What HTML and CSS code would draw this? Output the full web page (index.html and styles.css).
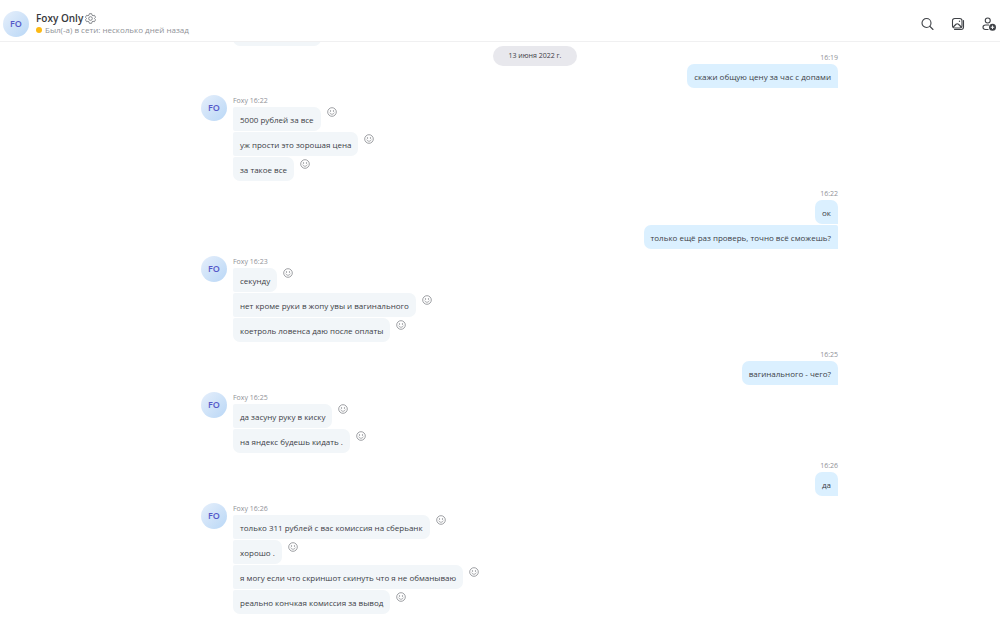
FILE: index.html
```html
<!DOCTYPE html>
<html lang="ru">
<head>
    <meta charset="UTF-8">
    <meta name="viewport" content="width=device-width, initial-scale=1.0">
    <title>Foxy Only</title>
    <link rel="stylesheet" href="styles.css">
</head>
<body>
    <svg class="sprite" aria-hidden="true">
        <symbol id="smile" viewBox="0 0 20 20">
            <circle cx="10" cy="10" r="8.6" fill="none" stroke="currentColor" stroke-width="1.6"/>
            <circle cx="7" cy="8" r="1.3" fill="currentColor"/>
            <circle cx="13" cy="8" r="1.3" fill="currentColor"/>
            <path d="M5.8 12c1 1.700 2.500 2.500 4.200 2.500s3.200-.8 4.200-2.500" fill="none" stroke="currentColor" stroke-width="1.5" stroke-linecap="round"/>
        </symbol>
    </svg>

    <header class="header">
        <div class="avatar">FO</div>
        <div class="contact">
            <div class="contact-name">
                <h1>Foxy Only</h1>
                <button type="button" class="icon-btn settings" aria-label="Настройки">
                    <svg width="11" height="11" viewBox="0 0 24 24" fill="none" stroke="currentColor" stroke-width="2" stroke-linejoin="round">
                        <path d="M9.500 1.500h5l.8 3.200 2.200 1.300 3.200-.9 2.300 4.200-2.300 2.700 2.300 2.700-2.300 4.200-3.200-.9-2.200 1.300-.8 3.200h-5l-.8-3.200-2.200-1.300-3.200.9L1 14.700 3.300 12 1 9.300l2.300-4.200 3.200.9 2.200-1.300z"/>
                        <circle cx="12" cy="12" r="4"/>
                    </svg>
                </button>
            </div>
            <div class="contact-status"><span class="status-dot"></span>Был(-а) в сети: несколько дней назад</div>
        </div>
        <div class="actions">
            <button type="button" class="icon-btn" aria-label="Поиск">
                <svg width="14" height="14" viewBox="0 0 28 28" fill="none" stroke="currentColor" stroke-width="2.200" stroke-linecap="round">
                    <circle cx="13" cy="12" r="9"/>
                    <path d="M19.500 18.500L26 25"/>
                </svg>
            </button>
            <button type="button" class="icon-btn" aria-label="Галерея">
                <svg width="14" height="14" viewBox="0 0 28 28" fill="none" stroke="currentColor" stroke-width="2.200" stroke-linejoin="round">
                    <rect x="3" y="3" width="19" height="19" rx="4.500"/>
                    <path d="M25 7v13a5 5 0 0 1-5 5H7" stroke-linecap="round"/>
                    <path d="M4.500 20l5.500-5.500q2.500-2 5 0l5.500 5.500"/>
                    <circle cx="17" cy="8.500" r="1.400" fill="currentColor" stroke="none"/>
                </svg>
            </button>
            <button type="button" class="icon-btn" aria-label="Добавить участника">
                <svg width="14" height="14" viewBox="0 0 28 28" fill="none" stroke="currentColor" stroke-width="2.200">
                    <circle cx="11.500" cy="7" r="5"/>
                    <path d="M13 25H7c-3 0-5-1.500-5-4.500S4 16 7 16h7"/>
                    <circle cx="21" cy="20.500" r="7" fill="currentColor" stroke="none"/>
                    <path d="M21 17v7M17.500 20.500h7" stroke="#fff" stroke-width="1.800"/>
                </svg>
            </button>
        </div>
    </header>

    <main class="chat">
        <div class="date">13 июня 2022 г.</div>

        <section class="group earlier">
            <div class="bubble"></div>
        </section>

        <section class="group mine">
            <div class="meta">16:19</div>
            <div class="row"><p class="bubble">скажи общую цену за час с допами</p></div>
        </section>

        <section class="group">
            <div class="avatar">FO</div>
            <div class="meta">Foxy 16:22</div>
            <div class="row"><p class="bubble">5000 рублей за все</p><button type="button" class="react" aria-label="Реакция"><svg><use href="#smile"/></svg></button></div>
            <div class="row"><p class="bubble">уж прости это зорошая цена</p><button type="button" class="react" aria-label="Реакция"><svg><use href="#smile"/></svg></button></div>
            <div class="row"><p class="bubble">за такое все</p><button type="button" class="react" aria-label="Реакция"><svg><use href="#smile"/></svg></button></div>
        </section>

        <section class="group mine">
            <div class="meta">16:22</div>
            <div class="row"><p class="bubble">ок</p></div>
            <div class="row"><p class="bubble">только ещё раз проверь, точно всё сможешь?</p></div>
        </section>

        <section class="group">
            <div class="avatar">FO</div>
            <div class="meta">Foxy 16:23</div>
            <div class="row"><p class="bubble">секунду</p><button type="button" class="react" aria-label="Реакция"><svg><use href="#smile"/></svg></button></div>
            <div class="row"><p class="bubble">нет кроме руки в жопу увы и вагинального</p><button type="button" class="react" aria-label="Реакция"><svg><use href="#smile"/></svg></button></div>
            <div class="row"><p class="bubble">коетроль ловенса даю после оплаты</p><button type="button" class="react" aria-label="Реакция"><svg><use href="#smile"/></svg></button></div>
        </section>

        <section class="group mine">
            <div class="meta">16:25</div>
            <div class="row"><p class="bubble">вагинального - чего?</p></div>
        </section>

        <section class="group">
            <div class="avatar">FO</div>
            <div class="meta">Foxy 16:25</div>
            <div class="row"><p class="bubble">да засуну руку в киску</p><button type="button" class="react" aria-label="Реакция"><svg><use href="#smile"/></svg></button></div>
            <div class="row"><p class="bubble">на яндекс будешь кидать .</p><button type="button" class="react" aria-label="Реакция"><svg><use href="#smile"/></svg></button></div>
        </section>

        <section class="group mine">
            <div class="meta">16:26</div>
            <div class="row"><p class="bubble">да</p></div>
        </section>

        <section class="group">
            <div class="avatar">FO</div>
            <div class="meta">Foxy 16:26</div>
            <div class="row"><p class="bubble">только 311 рублей с вас комиссия на сберьанк</p><button type="button" class="react" aria-label="Реакция"><svg><use href="#smile"/></svg></button></div>
            <div class="row"><p class="bubble">хорошо .</p><button type="button" class="react" aria-label="Реакция"><svg><use href="#smile"/></svg></button></div>
            <div class="row"><p class="bubble">я могу если что скриншот скинуть что я не обманываю</p><button type="button" class="react" aria-label="Реакция"><svg><use href="#smile"/></svg></button></div>
            <div class="row"><p class="bubble">реально кончкая комиссия за вывод</p><button type="button" class="react" aria-label="Реакция"><svg><use href="#smile"/></svg></button></div>
        </section>
    </main>
</body>
</html>
```
FILE: styles.css
```css
* {
    margin: 0;
    padding: 0;
    box-sizing: border-box;
}

body {
    font-family: "Open Sans", "Noto Sans", sans-serif;
    font-size: 8px;
    line-height: 12px;
    color: #3c4046;
    background: #fff;
    height: 100vh;
    display: flex;
    flex-direction: column;
}

button {
    border: none;
    background: none;
    color: inherit;
    cursor: pointer;
}

.sprite {
    display: none;
}

.header {
    display: flex;
    align-items: center;
    gap: 7px;
    flex: none;
    padding: 11px 4px 4px 3px;
    border-bottom: 1px solid #f0f0f1;
}

.avatar {
    display: flex;
    align-items: center;
    justify-content: center;
    width: 26px;
    height: 26px;
    border-radius: 50%;
    background: linear-gradient(135deg, #e6effb 0%, #b9d7f6 100%);
    color: #5558c8;
    font-size: 9px;
    font-weight: 600;
}

.contact-name {
    display: flex;
    align-items: center;
    gap: 2px;
}

.contact-name h1 {
    font-size: 10px;
    font-weight: 600;
    color: #36383c;
}

.icon-btn {
    display: flex;
}

.settings {
    color: #7c7f84;
}

.contact-status {
    display: flex;
    align-items: center;
    gap: 3px;
    color: #8f9297;
}

.status-dot {
    width: 6px;
    height: 6px;
    border-radius: 50%;
    background: #fcb913;
}

.actions {
    display: flex;
    gap: 17px;
    margin-left: auto;
    color: #3f4247;
}

/* messages stick to the bottom, older ones slide under the header */
.chat {
    position: relative;
    flex: 1;
    min-height: 0;
    display: flex;
    flex-direction: column;
    justify-content: flex-end;
    gap: 6px;
    overflow: hidden;
    padding: 0 162px 4px 201px;
}

.date {
    position: absolute;
    top: 4px;
    left: 232px;
    right: 162px;
    width: fit-content;
    margin: 0 auto;
    padding: 4px 16px;
    border-radius: 10px;
    background: #e8e8ed;
    font-size: 7px;
}

.group {
    display: grid;
    grid-template-columns: 26px 1fr;
    column-gap: 6px;
}

.group > * {
    grid-column: 2;
}

.group > .avatar {
    grid-column: 1;
    grid-row: 1 / 3;
}

.meta {
    font-size: 7px;
    color: #8f9297;
}

.row {
    display: flex;
    align-items: flex-start;
    gap: 6px;
    padding-bottom: 1px;
}

.bubble {
    min-height: 24px;
    padding: 7px 7px 5px;
    border-radius: 2px 7px 7px 2px;
    background: #f2f6f9;
}

.row:last-child .bubble {
    border-bottom-left-radius: 7px;
}

.earlier .bubble {
    width: 88px;
    border-bottom-left-radius: 7px;
}

.mine .meta {
    text-align: right;
}

.mine .row {
    justify-content: flex-end;
}

.mine .bubble,
.mine .row:last-child .bubble {
    border-radius: 7px 2px 0 7px;
    background: #dbf0ff;
}

.mine .meta + .row .bubble {
    border-top-right-radius: 7px;
}

.react {
    display: flex;
    margin-top: 2px;
    color: #85888d;
}

.meta + .row .react {
    margin-top: 0;
}

.react svg {
    width: 10px;
    height: 10px;
}
```
